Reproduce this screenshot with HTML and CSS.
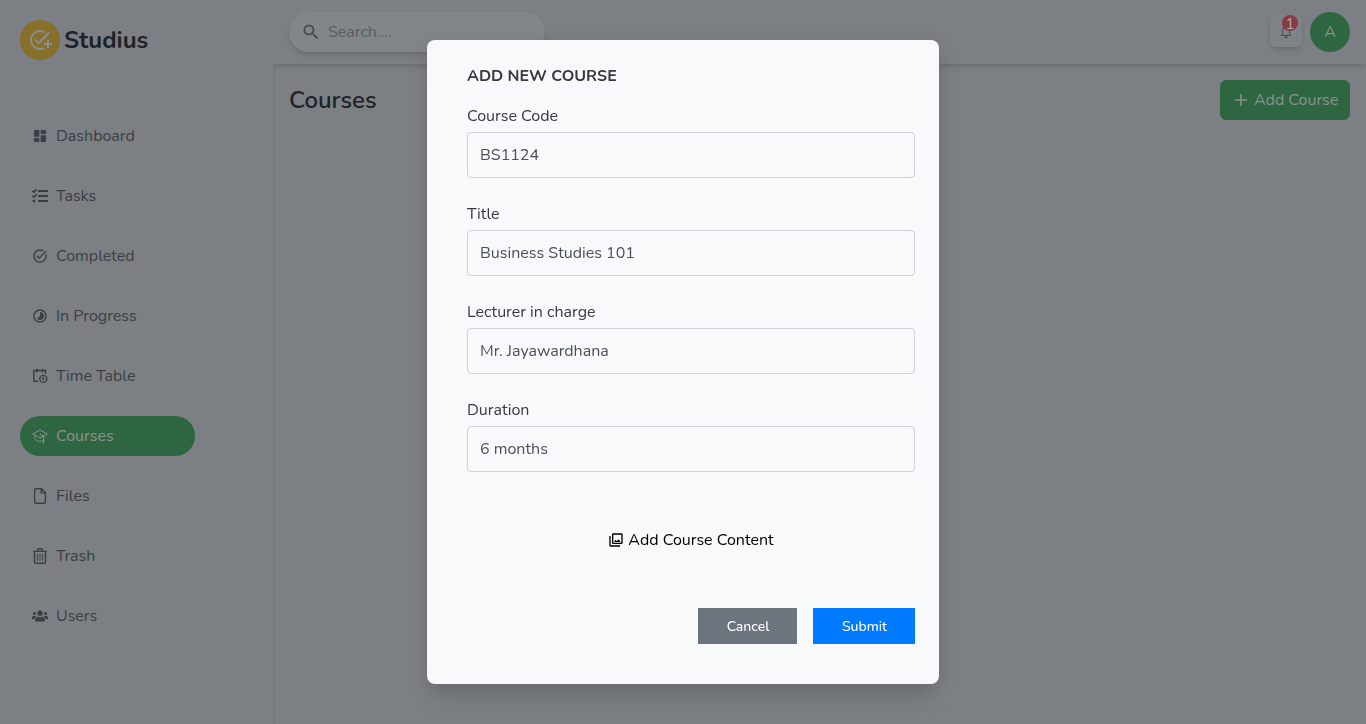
FILE: index.html
```html
<!DOCTYPE html>
<html lang="en">
<head>
<meta charset="utf-8">
<title>Studius</title>
<link rel="stylesheet" href="styles.css">
</head>
<body>
<div class="app">
  <aside class="sidebar">
    <div class="brand">
      <span class="brand-mark"><svg width="24" height="24" viewBox="0 0 24 24"><path d="M22 5.18L10.59 16.6l-4.24-4.24 1.41-1.41 2.83 2.83 10-10L22 5.18zM12 20c-4.41 0-8-3.59-8-8s3.59-8 8-8c1.57 0 3.04.46 4.28 1.25l1.45-1.45A10.02 10.02 0 0012 2C6.48 2 2 6.48 2 12s4.48 10 10 10c1.73 0 3.36-.44 4.78-1.22l-1.5-1.5c-1 .46-2.11.72-3.28.72zm7-5h-3v2h3v3h2v-3h3v-2h-3v-3h-2v3z"/></svg></span>
      <span class="brand-name">Studius</span>
    </div>
    <nav class="nav">
      <a class="nav-item"><svg viewBox="0 0 24 24"><path d="M3 13h8V3H3v10zm0 8h8v-6H3v6zm10 0h8V11h-8v10zm0-18v6h8V3h-8z"/></svg><span>Dashboard</span></a>
      <a class="nav-item"><svg viewBox="0 0 512 512"><path d="M139.61 35.5a12 12 0 0 0-17 0L58.93 98.81l-22.7-22.12a12 12 0 0 0-17 0L3.53 92.41a12 12 0 0 0 0 17l47.59 47.4a12.78 12.78 0 0 0 17.61 0l15.59-15.62L156.52 69a12.09 12.09 0 0 0 .09-17zm0 159.19a12 12 0 0 0-17 0l-63.68 63.72-22.7-22.1a12 12 0 0 0-17 0L3.53 252a12 12 0 0 0 0 17L51 316.5a12.77 12.77 0 0 0 17.6 0l15.7-15.69 72.2-72.22a12 12 0 0 0 .09-16.9zM64 368c-26.49 0-48.59 21.5-48.59 48S37.53 464 64 464a48 48 0 0 0 0-96zm432 16H208a16 16 0 0 0-16 16v32a16 16 0 0 0 16 16h288a16 16 0 0 0 16-16v-32a16 16 0 0 0-16-16zm0-320H208a16 16 0 0 0-16 16v32a16 16 0 0 0 16 16h288a16 16 0 0 0 16-16V80a16 16 0 0 0-16-16zm0 160H208a16 16 0 0 0-16 16v32a16 16 0 0 0 16 16h288a16 16 0 0 0 16-16v-32a16 16 0 0 0-16-16z"/></svg><span>Tasks</span></a>
      <a class="nav-item"><svg viewBox="0 0 24 24"><path d="M22 5.18L10.59 16.6l-4.24-4.24 1.41-1.41 2.83 2.83 10-10L22 5.18zm-2.21 5.04c.13.57.21 1.17.21 1.78 0 4.42-3.58 8-8 8s-8-3.58-8-8 3.58-8 8-8c1.58 0 3.04.46 4.28 1.25l1.44-1.44A9.9 9.9 0 0012 2C6.48 2 2 6.48 2 12s4.48 10 10 10 10-4.48 10-10c0-1.19-.22-2.33-.6-3.39l-1.61 1.61z"/></svg><span>Completed</span></a>
      <a class="nav-item"><svg viewBox="0 0 24 24"><path d="M16.24 7.76C15.07 6.59 13.54 6 12 6v6l-4.24 4.24c2.34 2.34 6.14 2.34 8.49 0 2.34-2.34 2.34-6.14-.01-8.48zM12 2C6.48 2 2 6.48 2 12s4.48 10 10 10 10-4.48 10-10S17.52 2 12 2zm0 18c-4.42 0-8-3.58-8-8s3.58-8 8-8 8 3.58 8 8-3.58 8-8 8z"/></svg><span>In Progress</span></a>
      <a class="nav-item"><svg class="line" viewBox="0 0 16 16"><path d="M6.2 13.3H1.8V2.5h11.7v3.2M5 .8v3.4M10.5 .8v3.4"/><circle cx="11.3" cy="10.9" r="3.5"/><path d="M11 8.9v2.2l1.4.8"/></svg><span>Time Table</span></a>
      <a class="nav-item active"><svg class="line thin" viewBox="0 0 16 16"><path d="M8 2.1L.7 6 8 9.9 15.3 6zM2.9 7.4v3.4c1.2 1.7 2.9 2.6 5.1 2.6 1.4 0 2.6-.3 3.5-1M11.5 15.6V8L8 6.3"/></svg><span>Courses</span></a>
      <a class="nav-item"><svg class="line" viewBox="0 0 16 16"><path d="M3.7.7h5.9l3.8 3.8v9.7a1.1 1.1 0 0 1-1.1 1.1H3.7a1.1 1.1 0 0 1-1.1-1.1V1.8A1.1 1.1 0 0 1 3.7.7zM9.2.7v4.2h4.2"/></svg><span>Files</span></a>
      <a class="nav-item"><svg class="line" viewBox="0 0 16 16"><path d="M1.2 3.4h13.6M2.5 3.4v10.4c0 .8.6 1.5 1.5 1.5h8c.9 0 1.5-.7 1.5-1.5V3.4M4.9 3.2l1-2.1c.1-.2.4-.4.6-.4h3c.3 0 .5.2.6.4l1 2.1"/><path class="ribs" d="M5.5 6v6.7M8 6v6.7M10.5 6v6.7"/></svg><span>Trash</span></a>
      <a class="nav-item"><svg viewBox="0 0 640 512"><path d="M96 224c35.3 0 64-28.7 64-64s-28.7-64-64-64-64 28.7-64 64 28.7 64 64 64zm448 0c35.3 0 64-28.7 64-64s-28.7-64-64-64-64 28.7-64 64 28.7 64 64 64zm32 32h-64c-17.6 0-33.5 7.1-45.1 18.6 40.3 22.1 68.9 62 75.1 109.4h66c17.7 0 32-14.3 32-32v-32c0-35.3-28.7-64-64-64zm-256 0c61.9 0 112-50.1 112-112S381.9 32 320 32 208 82.1 208 144s50.1 112 112 112zm76.8 32h-8.3c-20.8 10-43.9 16-68.5 16s-47.6-6-68.5-16h-8.3C179.6 288 128 339.6 128 403.2V432c0 26.5 21.5 48 48 48h288c26.5 0 48-21.5 48-48v-28.8c0-63.6-51.6-115.2-115.2-115.2zm-223.7-13.4C161.5 263.1 145.6 256 128 256H64c-35.3 0-64 28.7-64 64v32c0 17.7 14.3 32 32 32h65.9c6.3-47.4 34.9-87.3 75.2-109.4z"/></svg><span>Users</span></a>
    </nav>
  </aside>
  <div class="content">
    <header class="topbar">
      <div class="search"><svg width="20" height="20" viewBox="0 0 24 24"><path d="M15.5 14h-.79l-.28-.27A6.471 6.471 0 0016 9.5 6.5 6.5 0 109.5 16c1.61 0 3.09-.59 4.23-1.57l.27.28v.79l5 4.99L20.49 19l-4.99-5zm-6 0C7.01 14 5 11.99 5 9.5S7.01 5 9.5 5 14 7.01 14 9.5 11.99 14 9.5 14z"/></svg><span>Search....</span></div>
      <div class="account">
        <div class="bell"><svg width="16" height="16" viewBox="0 0 16 16"><path class="stroke" d="M3.4 11.4C4.4 10 4.5 8.8 4.6 6.9 4.8 4.4 5.8 3 8 3s3.2 1.4 3.4 3.9c.1 1.9.2 3.1 1.2 4.5z"/><path d="M6.2 12.8h3.6c-.3 1-.9 1.4-1.8 1.4s-1.5-.4-1.8-1.4z"/></svg><span class="badge">1</span></div>
        <div class="avatar">A</div>
      </div>
    </header>
    <main class="page">
      <h1>Courses</h1>
      <button class="add"><svg width="18" height="18" viewBox="0 0 18 18"><path d="M9 3v12M3 9h12"/></svg><span>Add Course</span></button>
    </main>
  </div>
</div>
<div class="overlay">
  <form class="modal">
    <h2>ADD NEW COURSE</h2>
    <label class="field"><span>Course Code</span><input value="BS1124"></label>
    <label class="field"><span>Title</span><input value="Business Studies 101"></label>
    <label class="field"><span>Lecturer in charge</span><input value="Mr. Jayawardhana"></label>
    <label class="field"><span>Duration</span><input value="6 months"></label>
    <div class="upload"><svg width="16" height="16" viewBox="0 0 24 24"><path d="M20 4v12H8V4h12m0-2H8c-1.1 0-2 .9-2 2v12c0 1.1.9 2 2 2h12c1.1 0 2-.9 2-2V4c0-1.1-.9-2-2-2zm-8.500 9.670l1.690 2.260 2.480-3.100L19 15H9zM2 6v14c0 1.100.9 2 2 2h14v-2H4V6H2z"/></svg><span>Add Course Content</span></div>
    <div class="actions"><button type="button" class="btn cancel">Cancel</button><button type="button" class="btn submit">Submit</button></div>
  </form>
</div>
</body>
</html>
```
FILE: styles.css
```css
* { box-sizing: border-box; margin: 0; }
body {
  height: 724px;
  overflow: hidden;
  background: #7c8084;
  font: 16px/24px Nunito, Lato, sans-serif;
  color: #3a3f45;
}
button, input { font: inherit; border: 0; }
svg { flex: none; fill: currentColor; }
.app { display: flex; height: 724px; }
.sidebar { position: relative; z-index: 1; width: 273px; padding: 20px; background: #7c7f83; }
.brand { display: flex; align-items: center; gap: 4px; height: 40px; }
.brand-mark {
  display: flex; align-items: center; justify-content: center;
  width: 40px; height: 40px; border-radius: 50%;
  background: #87702b; color: #8b8d8e;
}
.brand-name { font-size: 24px; font-weight: 700; color: #1f2329; }
.nav { display: flex; flex-direction: column; gap: 20px; margin-top: 56px; }
.nav-item {
  display: flex; align-items: center; gap: 8px;
  width: 175px; height: 40px; padding: 0 12px; border-radius: 20px;
}
.nav-item svg { width: 16px; height: 16px; }
.nav-item .line { fill: none; stroke: currentColor; stroke-width: 1.4; }
.nav-item .thin { stroke-width: 1; }
.nav-item .ribs { stroke-width: 1; }
.active { background: #2f6642; color: #8b918d; }
.content { flex: 1; }
.topbar {
  position: relative;
  display: flex; align-items: center; justify-content: space-between;
  height: 64px; padding: 0 16px; background: #7c7f83;
  box-shadow: 0 4px 6px -1px rgba(0,0,0,.1), 0 2px 4px -1px rgba(0,0,0,.06);
}
.search {
  display: flex; align-items: center; gap: 7.5px;
  width: 256px; height: 40px; padding: 0 11.5px; border-radius: 20px;
  background: #828589; color: #44484c;
  box-shadow: 0 4px 6px -1px rgba(0,0,0,.1), 0 2px 4px -1px rgba(0,0,0,.06);
}
.search span { color: #595e63; }
.account { display: flex; align-items: center; gap: 8px; }
.bell {
  position: relative;
  display: flex; align-items: center; justify-content: center;
  width: 32px; height: 32px; border-radius: 6px; background: #7f8286;
  margin-top: -2px;
  box-shadow: 0 4px 6px -1px rgba(0,0,0,.1), 0 2px 4px -1px rgba(0,0,0,.06);
}
.bell svg { margin-top: 2px; }
.stroke { fill: none; stroke: currentColor; stroke-width: .9; }
.badge {
  position: absolute; top: 0; left: 12px;
  width: 16px; height: 16px; border-radius: 50%;
  background: #8b3a43; color: #a9a9ad;
  font-size: 16px; line-height: 18px; text-align: center;
}
.avatar {
  width: 40px; height: 40px; border-radius: 50%;
  background: #2f6642; color: #899089; line-height: 40px; text-align: center;
}
.page {
  display: flex; justify-content: space-between; align-items: flex-start;
  height: 660px; padding: 16px;
  box-shadow: inset 3px 0 3px -2px rgba(0,0,0,.1);
}
.page h1 { font-size: 24px; line-height: 40px; font-weight: 600; color: #1f2329; }
.add {
  display: flex; align-items: center; gap: 4px;
  width: 130px; height: 40px; padding: 0 12px; border-radius: 6px;
  background: #2f6642; color: #8b918d; white-space: nowrap;
}
.add svg { stroke: currentColor; stroke-width: 1.5; }
.overlay { position: fixed; inset: 0; display: flex; align-items: center; justify-content: center; }
.modal {
  width: 512px; height: 644px; padding: 24px 24px 0 40px; border-radius: 8px;
  background: #f8f9fb; color: #343a40;
  box-shadow: 0 20px 25px -5px rgba(0,0,0,.1), 0 4px 20px rgba(0,0,0,.1);
}
.modal h2 { font-size: 16px; line-height: 24px; font-weight: 700; margin-bottom: 16px; }
.field { display: block; height: 98px; }
.field span { display: block; line-height: 24px; margin-bottom: 4px; }
.field input {
  display: block; width: 448px; height: 46px; padding: 0 12px;
  border: 1px solid #ced0da; border-radius: 4px; background: #f8f9fb; color: #495057;
}
.upload { display: flex; align-items: center; justify-content: center; gap: 4px; height: 24px; margin-top: 32px; color: #000; }
.actions { display: flex; justify-content: flex-end; gap: 16px; margin-top: 56px; }
.btn { height: 36px; padding: 2px 0 0 1px; font-size: 14px; font-weight: 500; color: #fff; }
.cancel { width: 99px; background: #6c757d; }
.submit { width: 102px; background: #007bff; }
```
